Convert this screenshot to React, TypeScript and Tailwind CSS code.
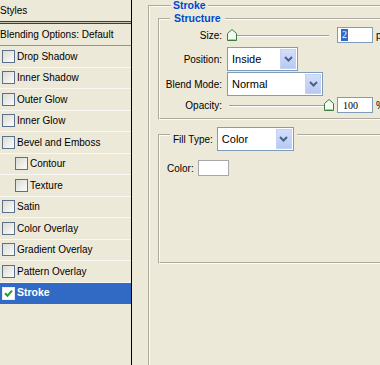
import React from "react";

const FONT = "font-['Liberation_Sans',Arial,sans-serif]";

function Checkbox({ checked }: { checked?: boolean }) {
  if (checked) {
    return (
      <span className="w-[13px] h-[13px] shrink-0 border border-[#e4ecfa] bg-white flex items-center justify-center">
        <svg width="9" height="9" viewBox="0 0 9 9">
          <path d="M1 4.2 L3.5 6.8 L8 1.6" stroke="#21a121" strokeWidth="2" fill="none" />
        </svg>
      </span>
    );
  }
  return (
    <span className="w-[13px] h-[13px] shrink-0 border border-[#5b7189] bg-linear-to-br from-[#dcdcd5] to-[#fbfbf9]" />
  );
}

type Row = { label: string; indent?: boolean; selected?: boolean };

const rows: Row[] = [
  { label: "Drop Shadow" },
  { label: "Inner Shadow" },
  { label: "Outer Glow" },
  { label: "Inner Glow" },
  { label: "Bevel and Emboss" },
  { label: "Contour", indent: true },
  { label: "Texture", indent: true },
  { label: "Satin" },
  { label: "Color Overlay" },
  { label: "Gradient Overlay" },
  { label: "Pattern Overlay" },
  { label: "Stroke", selected: true },
];

function Chevron() {
  return (
    <svg width="9" height="6" viewBox="0 0 9 6">
      <path d="M1 1 L4.5 4.5 L8 1" stroke="#4d6185" strokeWidth="2" fill="none" />
    </svg>
  );
}

function Select({ cls, value }: { cls: string; value: string }) {
  return (
    <div className={`${cls} h-[24px] border border-[#7f9db9] bg-white flex items-center`}>
      <span className="flex-1 pl-[4px] text-[11px] text-black">{value}</span>
      <span className="w-[16px] h-[20px] mr-[1px] border border-[#c4d3f5] bg-linear-to-b from-[#d3defa] to-[#b7c9f3] flex items-center justify-center">
        <Chevron />
      </span>
    </div>
  );
}

function Thumb() {
  return (
    <svg width="10" height="12" viewBox="0 0 10 12">
      <path d="M0.5 11.5 V4.5 L5 0.5 L9.5 4.5 V11.5 Z" fill="#f4fbf2" stroke="#3a7d3a" strokeWidth="1" />
      <path d="M1.5 10.5 H8.5" stroke="#9fd39a" strokeWidth="1" />
    </svg>
  );
}

function Slider({ right }: { right?: boolean }) {
  return (
    <div className="relative w-[106px] h-[16px]">
      <div className="absolute left-[2px] right-[4px] top-[8px] h-[2px] border-t border-[#a3a091] border-b border-b-white" />
      <div className={`absolute top-[2px] ${right ? "left-[97px]" : "left-[0px]"} leading-none`}>
        <Thumb />
      </div>
    </div>
  );
}

const groove = "border-2 border-[#fffcee] [--tw-border-style:groove] [border-style:groove]";

export default function App() {
  return (
    <div className={`${FONT} w-[380px] h-[365px] overflow-hidden bg-[#ece9d8] flex text-black`}>
      {/* Left styles list */}
      <div className="w-[132px] shrink-0 h-full border-r border-black flex flex-col text-[10px]">
        <div className="h-[21px] flex items-center">Styles</div>
        <div className="h-[1px] bg-[#3e3d38]" />
        <div className="h-[1px] bg-[#c9c5b5]" />
        <div className="h-[1px] bg-[#3e3d38]" />
        <div className="h-[22px] flex items-center border-b border-[#97948a]">Blending Options: Default</div>
        {rows.map((r) => (
          <div
            key={r.label}
            className={`h-[21.5px] shrink-0 flex items-center gap-[2px] ${r.indent ? "pl-[15px]" : "pl-[2px]"} ${
              r.selected ? "bg-[#316ac5] text-white font-bold text-[10.5px]" : "border-b border-[#f8f7f1]"
            }`}
          >
            <Checkbox checked={r.selected} />
            <span>{r.label}</span>
          </div>
        ))}
      </div>

      {/* Right panel */}
      <div className="flex-1 min-w-0 overflow-hidden pl-[16px]">
        <fieldset className={`${groove} w-[260px] h-[420px] pl-[8px]`}>
          <legend className="ml-[13px] px-[2px] text-[10.5px] leading-[11px] font-bold text-[#0046d5]">Stroke</legend>

          {/* Structure */}
          <fieldset className={`${groove} mt-[2px] pt-[3px] pb-[5px] text-[10px]`}>
            <legend className="ml-[10px] px-[4px] text-[10.5px] leading-[11px] font-bold text-[#0046d5]">Structure</legend>

            <div className="flex items-center h-[16px]">
              <span className="w-[62px] text-right">Size:</span>
              <div className="ml-[5px]">
                <Slider />
              </div>
              <div className="ml-[4px] w-[36px] h-[16px] border border-[#7f9db9] bg-white flex items-center pl-[3px] font-['Liberation_Serif',serif] text-[10px]">
                <span className="bg-[#316ac5] text-white px-[1px] leading-[12px]">2</span>
              </div>
              <span className="ml-[3px]">px</span>
            </div>

            <div className="flex items-center h-[24px] mt-[4px]">
              <span className="w-[62px] text-right">Position:</span>
              <div className="ml-[5px]">
                <Select cls="w-[71px]" value="Inside" />
              </div>
            </div>

            <div className="flex items-center h-[24px] mt-[1px]">
              <span className="w-[62px] text-right">Blend Mode:</span>
              <div className="ml-[5px]">
                <Select cls="w-[96px]" value="Normal" />
              </div>
            </div>

            <div className="flex items-center h-[16px] mt-[1px]">
              <span className="w-[62px] text-right">Opacity:</span>
              <div className="ml-[5px]">
                <Slider right />
              </div>
              <div className="ml-[4px] w-[36px] h-[16px] border border-[#7f9db9] bg-white flex items-center pl-[5px] font-['Liberation_Serif',serif] text-[10px]">
                100
              </div>
              <span className="ml-[3px]">%</span>
            </div>
          </fieldset>

          {/* Fill Type */}
          <fieldset className={`${groove} mt-[7px] text-[10px]`}>
            <legend className="ml-[10px] px-[3px] h-[16px] flex items-start">
              <span className="h-[24px] flex items-center">Fill Type:</span>
              <span className="ml-[4px]">
                <Select cls="w-[77px]" value="Color" />
              </span>
            </legend>
            <div className="h-[119px] pt-[17px] pl-[7px]">
              <div className="flex items-center gap-[4px]">
                <span>Color:</span>
                <span className="w-[31px] h-[16px] border border-[#a7a6aa] bg-white" />
              </div>
            </div>
          </fieldset>
        </fieldset>
      </div>
    </div>
  );
}
